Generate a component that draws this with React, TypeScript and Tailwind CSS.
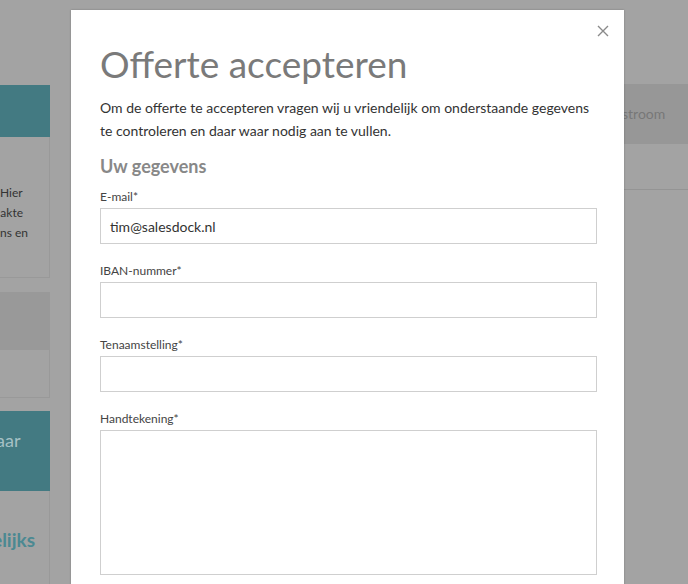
const font = { fontFamily: 'Lato, "Open Sans", sans-serif' };

function Field({ label, value, tall }: { label: string; value?: string; tall?: boolean }) {
  return (
    <div className="mt-[19px] first:mt-0">
      <div className="mb-[3px] h-4 text-[12px] leading-4 text-[#444]">{label}</div>
      <div
        className={
          (tall ? 'h-[145px]' : 'h-9') +
          ' flex items-center border border-[#cfcfcf] bg-white px-[9px] text-[14px] text-[#333]'
        }
      >
        {value}
      </div>
    </div>
  );
}

export default function App() {
  return (
    <div className="relative h-[584px] w-[688px] overflow-hidden bg-[#a3a3a3]" style={font}>
      {/* dimmed page behind the dialog */}
      <div className="flex h-full">
        <div className="w-[50px] shrink-0 overflow-hidden pt-[85px]">
          <div className="h-[52px] bg-[#437a82]" />
          <div className="flex h-[141px] flex-col border-r border-b border-[#999] pt-[46px] text-right text-[12px] leading-5 text-[#333]">
            <div className="pr-[29px]">Hier</div>
            <div className="pr-[26px]">akte</div>
            <div className="pr-[21px]">ns en</div>
          </div>
          <div className="mt-[14px] h-[58px] bg-[#999999]" />
          <div className="h-[48px] border-r border-b border-[#999]" />
          <div className="mt-[13px] flex h-[80px] items-start bg-[#437a82] pt-[16px]">
            <span className="-ml-[4px] text-[18px] text-[#a6c1c5]">aar</span>
          </div>
          <div className="h-[100px] border-r border-[#999] pt-[35px]">
            <span className="-ml-[8px] text-[19px] font-bold text-[#4b8992]">elijks</span>
          </div>
        </div>
        <div className="w-[574px] shrink-0" />
        <div className="flex-1 pt-[84px]">
          <div className="flex h-[60px] items-start bg-[#979797] pt-[19px] text-[14px] text-[#777]">
            <span className="-ml-[2px]">stroom</span>
          </div>
          <div className="h-[46px] border-b border-[#949494]" />
        </div>
      </div>

      {/* dialog */}
      <div className="absolute top-[10px] left-[71px] h-[600px] w-[553px] bg-white pr-[27px] pl-[29px] shadow-[0_0_2px_rgba(0,0,0,0.25)]">
        <button className="absolute top-[15px] right-[15px] flex h-3 w-3 items-center justify-center">
          <svg width="12" height="12" viewBox="0 0 12 12" fill="none" stroke="#8a8a8a" strokeWidth="1.4">
            <path d="M1 1l10 10M11 1L1 11" />
          </svg>
        </button>
        <h1 className="mt-[32px] text-[37px] leading-[44px] font-normal text-[#7a7a7a]">Offerte accepteren</h1>
        <p className="mt-[10px] text-[14px] leading-[23px] text-[#333]">
          Om de offerte te accepteren vragen wij u vriendelijk om onderstaande gegevens te controleren en
          daar waar nodig aan te vullen.
        </p>
        <h2 className="mt-[12px] text-[18px] leading-6 font-bold text-[#888]">Uw gegevens</h2>
        <div className="mt-[11px]">
          <Field label="E-mail*" value="tim@salesdock.nl" />
          <Field label="IBAN-nummer*" />
          <Field label="Tenaamstelling*" />
          <Field label="Handtekening*" tall />
        </div>
      </div>
    </div>
  );
}
